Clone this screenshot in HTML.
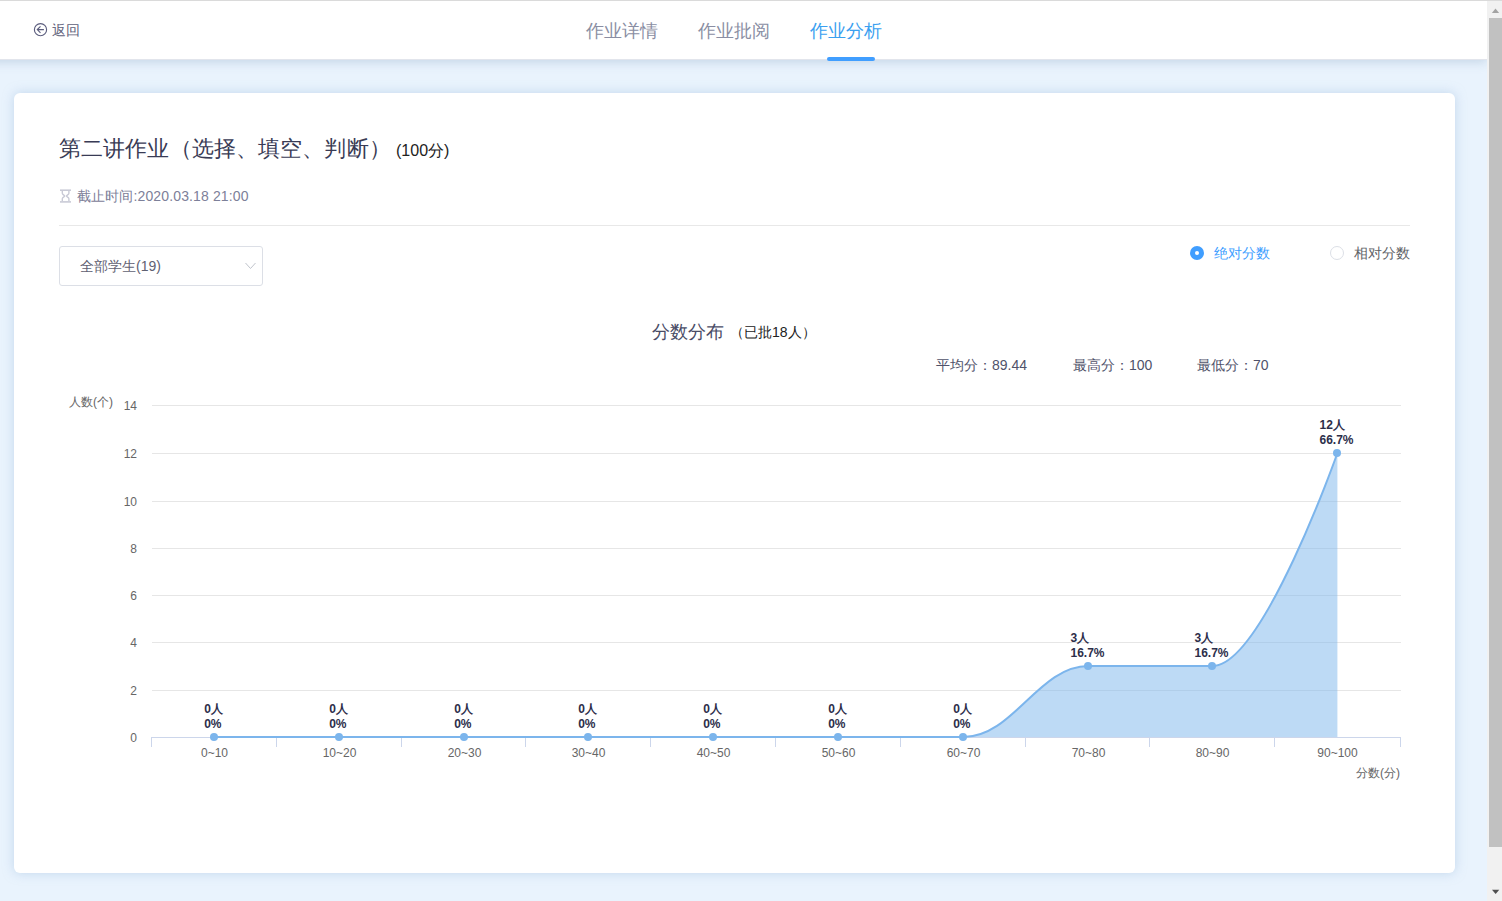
<!DOCTYPE html>
<html><head><meta charset="utf-8">
<style>
html,body{margin:0;padding:0;}
body{width:1502px;height:901px;overflow:hidden;position:relative;background:#e9f3fd;font-family:"Liberation Sans",sans-serif;}
.abs{position:absolute;white-space:nowrap;}
#topline{position:absolute;left:0;top:0;width:1502px;height:1px;background:#dadada;z-index:5;}
#header{position:absolute;left:-30px;top:1px;width:1517px;padding-left:0;height:58px;background:#fff;border-bottom:1px solid #e2e5ec;box-shadow:0 2px 10px rgba(150,175,205,0.45);z-index:3;}
#scroll{position:absolute;left:1487px;top:1px;width:15px;height:900px;background:#f1f1f1;z-index:4;}
#thumb{position:absolute;left:2px;top:17px;width:13px;height:829px;background:#c1c1c1;}
#card{position:absolute;left:14px;top:93px;width:1441px;height:780px;background:#fff;border-radius:6px;box-shadow:0 0 11px rgba(155,188,222,0.5);}
.tab{position:absolute;top:18px;font-size:18px;color:#8a8ea3;}

.yl{position:absolute;left:87px;width:50px;text-align:right;font-size:12px;line-height:13px;color:#666;}
.xl{position:absolute;top:747px;width:100px;text-align:center;font-size:12px;line-height:13px;color:#666;}
.dl{position:absolute;width:0;height:0;}
.dl>div{position:absolute;transform:translateX(-50%);font-size:12px;font-weight:bold;line-height:15px;color:#2c2e4a;white-space:nowrap;}
</style></head>
<body>
<div id="topline"></div>
<div id="header"><div style="position:absolute;left:30px;top:0;width:1487px;height:58px">
  <svg class="abs" style="left:33px;top:21px" width="16" height="16" viewBox="0 0 16 16">
    <circle cx="7.5" cy="7.65" r="6.1" fill="none" stroke="#5b5d7d" stroke-width="1.15"/>
    <path d="M4.3 7.6 H10.9 M7.5 4.4 L4.3 7.6 L7.5 10.8" fill="none" stroke="#5b5d7d" stroke-width="1.15"/>
  </svg>
  <div class="abs" style="left:52px;top:21px;font-size:14px;color:#5d6079">返回</div>
  <div class="tab" style="left:586px">作业详情</div>
  <div class="tab" style="left:698px">作业批阅</div>
  <div class="tab" style="left:810px;color:#3aa0f0">作业分析</div>
  <div class="abs" style="left:827px;top:56px;width:48px;height:4px;border-radius:2px;background:#409eff"></div>
</div>
</div>
<div id="scroll">
  <svg class="abs" style="left:0;top:0" width="15" height="900">
    <path d="M4.85 11.9 L8.5 7.6 L12.15 11.9 Z" fill="#a3a3a3"/>
    <path d="M4.96 888.8 L12.3 888.8 L8.63 893 Z" fill="#505050"/>
  </svg>
  <div id="thumb"></div>
</div>
<div id="card"></div>
<div class="abs" style="left:59px;top:134px;font-size:22px;color:#393b55;letter-spacing:0.12px">第二讲作业（选择、填空、判断）</div>
<div class="abs" style="left:396px;top:141px;font-size:16px;color:#222">(100分)</div>
<svg class="abs" style="left:59px;top:188px" width="13" height="16" viewBox="0 0 13 16">
  <rect x="1" y="1.4" width="11" height="1.6" fill="#c9cad6"/>
  <rect x="1" y="13.1" width="11" height="1.6" fill="#c9cad6"/>
  <path d="M3.3 3 V5.2 C3.3 6.6 5.7 7.3 5.7 8 C5.7 8.7 3.3 9.4 3.3 10.8 V13 M9.9 3 V5.2 C9.9 6.6 7.5 7.3 7.5 8 C7.5 8.7 9.9 9.4 9.9 10.8 V13" fill="none" stroke="#c9cad6" stroke-width="1.4"/>
</svg>
<div class="abs" style="left:77px;top:188px;font-size:14px;color:#7d8099;letter-spacing:0.13px">截止时间:2020.03.18 21:00</div>
<div class="abs" style="left:59px;top:225px;width:1351px;height:1px;background:#e8e8e8"></div>
<div class="abs" style="left:59px;top:246px;width:202px;height:38px;border:1px solid #dcdfe6;border-radius:3px;background:#fff"></div>
<div class="abs" style="left:80px;top:258px;font-size:14px;color:#5f6172">全部学生(19)</div>
<svg class="abs" style="left:244px;top:261px" width="13" height="9" viewBox="0 0 13 9"><path d="M1.5 2 L6.5 7.5 L11.5 2" fill="none" stroke="#c0c4cc" stroke-width="1"/></svg>
<div class="abs" style="left:1190px;top:246px;width:14px;height:14px;border-radius:50%;background:#409eff"></div>
<div class="abs" style="left:1195px;top:251px;width:4px;height:4px;border-radius:50%;background:#fff"></div>
<div class="abs" style="left:1214px;top:245px;font-size:14px;color:#409eff">绝对分数</div>
<div class="abs" style="left:1330px;top:246px;width:12px;height:12px;border-radius:50%;border:1px solid #dcdfe6;background:#fff"></div>
<div class="abs" style="left:1354px;top:245px;font-size:14px;color:#606266">相对分数</div>
<div class="abs" style="left:652px;top:320px;font-size:18px;color:#4a4c66">分数分布</div>
<div class="abs" style="left:730px;top:324px;font-size:14px;color:#222">（已批18人）</div>
<div class="abs" style="left:936px;top:357px;font-size:14px;color:#50526a">平均分：89.44</div>
<div class="abs" style="left:1073px;top:357px;font-size:14px;color:#50526a">最高分：100</div>
<div class="abs" style="left:1197px;top:357px;font-size:14px;color:#50526a">最低分：70</div>
<div class="abs" style="left:69px;top:394px;font-size:12px;color:#666;z-index:3">人数(个)</div>
<div class="abs" style="left:1356px;top:765px;font-size:12px;color:#666;z-index:3">分数(分)</div>
<svg id="chart" style="position:absolute;left:0;top:0;z-index:2" width="1487" height="901" viewBox="0 0 1487 901">
<rect x="152" y="405" width="1249" height="1" fill="#e6e6e6"/>
<rect x="152" y="453" width="1249" height="1" fill="#e6e6e6"/>
<rect x="152" y="501" width="1249" height="1" fill="#e6e6e6"/>
<rect x="152" y="548" width="1249" height="1" fill="#e6e6e6"/>
<rect x="152" y="595" width="1249" height="1" fill="#e6e6e6"/>
<rect x="152" y="642" width="1249" height="1" fill="#e6e6e6"/>
<rect x="152" y="690" width="1249" height="1" fill="#e6e6e6"/>
<path d="M214.40,737.00 C214.40,737.00 289.40,737.00 339.40,737.00 C389.40,737.00 414.40,737.00 464.40,737.00 C514.00,737.00 538.80,737.00 588.40,737.00 C638.40,737.00 663.40,737.00 713.40,737.00 C763.40,737.00 788.40,737.00 838.40,737.00 C888.40,737.00 913.40,737.00 963.40,737.00 C1013.40,737.00 1038.40,666.00 1088.40,666.00 C1138.00,666.00 1162.80,666.00 1212.40,666.00 C1262.40,666.00 1337.40,453.00 1337.40,453.00 L1337.40,737.0 L214.40,737.0 Z" fill="rgba(124,181,236,0.5)"/>
<rect x="151" y="737" width="1250" height="1" fill="#ccd6eb"/>
<rect x="151" y="737" width="1" height="10" fill="#ccd6eb"/>
<rect x="276" y="737" width="1" height="10" fill="#ccd6eb"/>
<rect x="401" y="737" width="1" height="10" fill="#ccd6eb"/>
<rect x="525" y="737" width="1" height="10" fill="#ccd6eb"/>
<rect x="650" y="737" width="1" height="10" fill="#ccd6eb"/>
<rect x="775" y="737" width="1" height="10" fill="#ccd6eb"/>
<rect x="900" y="737" width="1" height="10" fill="#ccd6eb"/>
<rect x="1025" y="737" width="1" height="10" fill="#ccd6eb"/>
<rect x="1149" y="737" width="1" height="10" fill="#ccd6eb"/>
<rect x="1274" y="737" width="1" height="10" fill="#ccd6eb"/>
<rect x="1400" y="737" width="1" height="10" fill="#ccd6eb"/>
<path d="M214.40,737.00 C214.40,737.00 289.40,737.00 339.40,737.00 C389.40,737.00 414.40,737.00 464.40,737.00 C514.00,737.00 538.80,737.00 588.40,737.00 C638.40,737.00 663.40,737.00 713.40,737.00 C763.40,737.00 788.40,737.00 838.40,737.00 C888.40,737.00 913.40,737.00 963.40,737.00 C1013.40,737.00 1038.40,666.00 1088.40,666.00 C1138.00,666.00 1162.80,666.00 1212.40,666.00 C1262.40,666.00 1337.40,453.00 1337.40,453.00" fill="none" stroke="#7cb5ec" stroke-width="2" stroke-linejoin="round" stroke-linecap="round"/>
<circle cx="214" cy="737.00" r="4" fill="#7cb5ec"/>
<circle cx="339" cy="737.00" r="4" fill="#7cb5ec"/>
<circle cx="464" cy="737.00" r="4" fill="#7cb5ec"/>
<circle cx="588" cy="737.00" r="4" fill="#7cb5ec"/>
<circle cx="713" cy="737.00" r="4" fill="#7cb5ec"/>
<circle cx="838" cy="737.00" r="4" fill="#7cb5ec"/>
<circle cx="963" cy="737.00" r="4" fill="#7cb5ec"/>
<circle cx="1088" cy="666.00" r="4" fill="#7cb5ec"/>
<circle cx="1212" cy="666.00" r="4" fill="#7cb5ec"/>
<circle cx="1337" cy="453.00" r="4" fill="#7cb5ec"/>
</svg>
<div id="texts" style="position:absolute;left:0;top:0;z-index:3">
<div class="yl" style="top:732px">0</div>
<div class="yl" style="top:685px">2</div>
<div class="yl" style="top:637px">4</div>
<div class="yl" style="top:590px">6</div>
<div class="yl" style="top:543px">8</div>
<div class="yl" style="top:496px">10</div>
<div class="yl" style="top:448px">12</div>
<div class="yl" style="top:400px">14</div>
<div class="xl" style="left:164.5px">0~10</div>
<div class="xl" style="left:289.5px">10~20</div>
<div class="xl" style="left:414.5px">20~30</div>
<div class="xl" style="left:538.5px">30~40</div>
<div class="xl" style="left:663.5px">40~50</div>
<div class="xl" style="left:788.5px">50~60</div>
<div class="xl" style="left:913.5px">60~70</div>
<div class="xl" style="left:1038.5px">70~80</div>
<div class="xl" style="left:1162.5px">80~90</div>
<div class="xl" style="left:1287.5px">90~100</div>
<div class="dl" style="left:213.5px;top:702.0px"><div>0人<br>0%</div></div>
<div class="dl" style="left:338.5px;top:702.0px"><div>0人<br>0%</div></div>
<div class="dl" style="left:463.5px;top:702.0px"><div>0人<br>0%</div></div>
<div class="dl" style="left:587.5px;top:702.0px"><div>0人<br>0%</div></div>
<div class="dl" style="left:712.5px;top:702.0px"><div>0人<br>0%</div></div>
<div class="dl" style="left:837.5px;top:702.0px"><div>0人<br>0%</div></div>
<div class="dl" style="left:962.5px;top:702.0px"><div>0人<br>0%</div></div>
<div class="dl" style="left:1087.5px;top:631.0px"><div>3人<br>16.7%</div></div>
<div class="dl" style="left:1211.5px;top:631.0px"><div>3人<br>16.7%</div></div>
<div class="dl" style="left:1336.5px;top:418.0px"><div>12人<br>66.7%</div></div>
</div>
</body></html>
